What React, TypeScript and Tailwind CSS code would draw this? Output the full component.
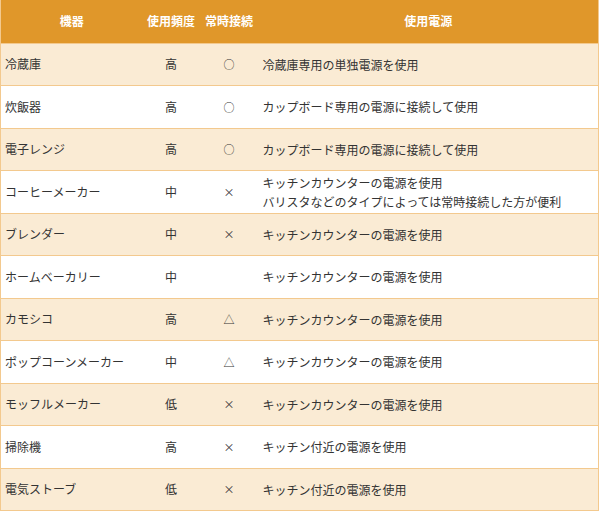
const rows = [
  { name: "冷蔵庫", freq: "高", conn: "○", power: ["冷蔵庫専用の単独電源を使用"] },
  { name: "炊飯器", freq: "高", conn: "○", power: ["カップボード専用の電源に接続して使用"] },
  { name: "電子レンジ", freq: "高", conn: "○", power: ["カップボード専用の電源に接続して使用"] },
  {
    name: "コーヒーメーカー",
    freq: "中",
    conn: "×",
    power: ["キッチンカウンターの電源を使用", "バリスタなどのタイプによっては常時接続した方が便利"],
  },
  { name: "ブレンダー", freq: "中", conn: "×", power: ["キッチンカウンターの電源を使用"] },
  { name: "ホームベーカリー", freq: "中", conn: "", power: ["キッチンカウンターの電源を使用"] },
  { name: "カモシコ", freq: "高", conn: "△", power: ["キッチンカウンターの電源を使用"] },
  { name: "ポップコーンメーカー", freq: "中", conn: "△", power: ["キッチンカウンターの電源を使用"] },
  { name: "モッフルメーカー", freq: "低", conn: "×", power: ["キッチンカウンターの電源を使用"] },
  { name: "掃除機", freq: "高", conn: "×", power: ["キッチン付近の電源を使用"] },
  { name: "電気ストーブ", freq: "低", conn: "×", power: ["キッチン付近の電源を使用"] },
]

export default function App() {
  return (
    <div
      className="w-[600px] h-[511px] bg-white text-[12px] text-[#333]"
      style={{ fontFamily: '"Noto Sans CJK JP", "Noto Sans", sans-serif' }}
    >
      <table className="w-[599px] table-fixed border-collapse border-l border-r border-b border-[#f3c98e]">
        <colgroup>
          <col className="w-[142px]" />
          <col className="w-[57px]" />
          <col className="w-[59px]" />
          <col />
        </colgroup>
        <thead>
          <tr className="h-[43px] bg-[#e0972a] text-white font-bold border-b border-[#f3c98e]">
            <th className="text-center">機器</th>
            <th className="text-center">使用頻度</th>
            <th className="text-center">常時接続</th>
            <th className="text-center">使用電源</th>
          </tr>
        </thead>
        <tbody>
          {rows.map((r, i) => (
            <tr
              key={r.name}
              className={`h-[42.5px] border-b border-[#f3c98e] ${i % 2 === 0 ? "bg-[#faebd4]" : "bg-white"}`}
            >
              <td className="px-1 leading-[18px]">{r.name}</td>
              <td className="text-center leading-[18px]">{r.freq}</td>
              <td className="text-center text-[11px] leading-[18px]">{r.conn}</td>
              <td className="px-1 leading-[19px]">
                {r.power.map((p) => (
                  <div key={p}>{p}</div>
                ))}
              </td>
            </tr>
          ))}
        </tbody>
      </table>
    </div>
  )
}
